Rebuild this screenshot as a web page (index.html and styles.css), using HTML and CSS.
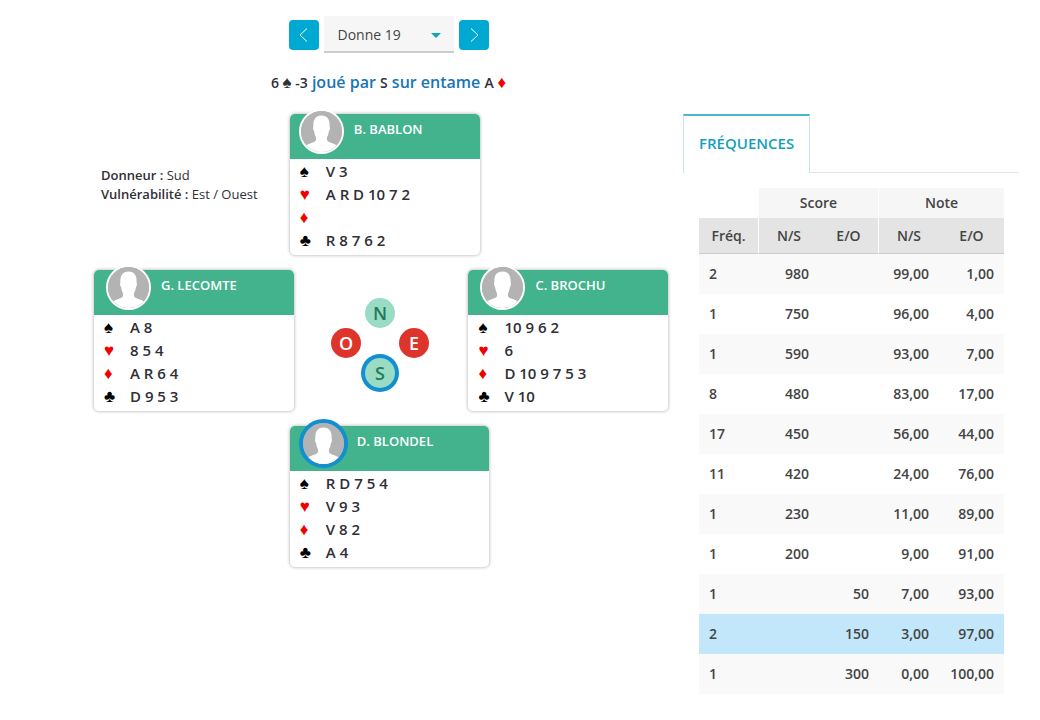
FILE: index.html
```html
<!DOCTYPE html>
<html lang="fr">
<head>
    <meta charset="utf-8">
    <meta name="viewport" content="width=device-width, initial-scale=1">
    <title>Donne 19</title>
    <link rel="stylesheet" href="styles.css">
</head>
<body>
    <!-- Default player picture, reused by the four hands -->
    <svg class="defs" aria-hidden="true">
        <symbol id="avatar" viewBox="0 0 41 41">
            <rect width="41" height="41" fill="#b3b3b3"/>
            <path fill="#fff" d="M20.500 4.500C14.500 4.500 12 8.500 12.400 15.500C11.700 16 12 19 13.200 20.500C13.500 23.500 14.300 25 15 26.500C15.300 29 15 30 13 31C9.500 32.700 6 33 3 36V41H38V36C35 33 31.500 32.700 28 31C26 30 25.700 29 26 26.500C26.700 25 27.500 23.500 27.800 20.500C29 19 29.300 16 28.600 15.500C29 8.500 26.500 4.500 20.500 4.500Z"/>
        </symbol>
    </svg>

    <div class="page">
        <main class="deal">
            <div class="deal-head">
                <form class="deal-nav">
                    <button type="button" class="nav-button" aria-label="Donne précédente">
                        <svg width="14" height="16" viewBox="0 0 14 16"><path d="M10 1.500L3 8L10 14.500"/></svg>
                    </button>
                    <div class="select-wrap">
                        <select class="deal-select" aria-label="Donne">
                            <option>Donne 18</option>
                            <option selected>Donne 19</option>
                            <option>Donne 20</option>
                        </select>
                        <span class="caret"></span>
                    </div>
                    <button type="button" class="nav-button" aria-label="Donne suivante">
                        <svg width="14" height="16" viewBox="0 0 14 16"><path d="M4 1.500L11 8L4 14.500"/></svg>
                    </button>
                </form>
                <p class="contract"><b>6 <span class="suit">♠</span> -3</b> joué par <b>S</b> sur entame <b>A <span class="suit red">♦</span></b></p>
            </div>

            <div class="board">
                <div class="row">
                    <div class="info">
                        <div><b>Donneur :</b> Sud</div>
                        <div><b>Vulnérabilité :</b> Est / Ouest</div>
                    </div>
                    <section class="hand north">
                        <header class="hand-head">
                            <svg class="avatar"><use href="#avatar"/></svg>
                            <h2>B. BABLON</h2>
                        </header>
                        <ul class="cards">
                            <li><span class="suit">♠</span>V 3</li>
                            <li><span class="suit red">♥</span>A R D 10 7 2</li>
                            <li><span class="suit red">♦</span></li>
                            <li><span class="suit">♣</span>R 8 7 6 2</li>
                        </ul>
                    </section>
                </div>

                <div class="row middle">
                    <section class="hand">
                        <header class="hand-head">
                            <svg class="avatar"><use href="#avatar"/></svg>
                            <h2>G. LECOMTE</h2>
                        </header>
                        <ul class="cards">
                            <li><span class="suit">♠</span>A 8</li>
                            <li><span class="suit red">♥</span>8 5 4</li>
                            <li><span class="suit red">♦</span>A R 6 4</li>
                            <li><span class="suit">♣</span>D 9 5 3</li>
                        </ul>
                    </section>
                    <div class="compass">
                        <span class="seat seat-n">N</span>
                        <span class="seat seat-o vulnerable">O</span>
                        <span class="seat seat-e vulnerable">E</span>
                        <span class="seat seat-s active">S</span>
                    </div>
                    <section class="hand">
                        <header class="hand-head">
                            <svg class="avatar"><use href="#avatar"/></svg>
                            <h2>C. BROCHU</h2>
                        </header>
                        <ul class="cards">
                            <li><span class="suit">♠</span>10 9 6 2</li>
                            <li><span class="suit red">♥</span>6</li>
                            <li><span class="suit red">♦</span>D 10 9 7 5 3</li>
                            <li><span class="suit">♣</span>V 10</li>
                        </ul>
                    </section>
                </div>

                <div class="row">
                    <section class="hand south">
                        <header class="hand-head">
                            <svg class="avatar"><use href="#avatar"/></svg>
                            <h2>D. BLONDEL</h2>
                        </header>
                        <ul class="cards">
                            <li><span class="suit">♠</span>R D 7 5 4</li>
                            <li><span class="suit red">♥</span>V 9 3</li>
                            <li><span class="suit red">♦</span>V 8 2</li>
                            <li><span class="suit">♣</span>A 4</li>
                        </ul>
                    </section>
                </div>
            </div>
        </main>

        <aside class="results">
            <div class="tabs">
                <button type="button" class="tab">FRÉQUENCES</button>
            </div>
            <div class="tab-content">
                <table class="scores">
                    <colgroup>
                        <col class="col"><col class="col"><col class="col"><col class="col"><col>
                    </colgroup>
                    <thead>
                        <tr class="groups">
                            <td></td>
                            <th colspan="2">Score</th>
                            <th colspan="2">Note</th>
                        </tr>
                        <tr class="labels">
                            <th>Fréq.</th>
                            <th>N/S</th>
                            <th>E/O</th>
                            <th>N/S</th>
                            <th>E/O</th>
                        </tr>
                    </thead>
                    <tbody>
                        <tr><td>2</td><td>980</td><td></td><td>99,00</td><td>1,00</td></tr>
                        <tr><td>1</td><td>750</td><td></td><td>96,00</td><td>4,00</td></tr>
                        <tr><td>1</td><td>590</td><td></td><td>93,00</td><td>7,00</td></tr>
                        <tr><td>8</td><td>480</td><td></td><td>83,00</td><td>17,00</td></tr>
                        <tr><td>17</td><td>450</td><td></td><td>56,00</td><td>44,00</td></tr>
                        <tr><td>11</td><td>420</td><td></td><td>24,00</td><td>76,00</td></tr>
                        <tr><td>1</td><td>230</td><td></td><td>11,00</td><td>89,00</td></tr>
                        <tr><td>1</td><td>200</td><td></td><td>9,00</td><td>91,00</td></tr>
                        <tr><td>1</td><td></td><td>50</td><td>7,00</td><td>93,00</td></tr>
                        <tr class="current"><td>2</td><td></td><td>150</td><td>3,00</td><td>97,00</td></tr>
                        <tr><td>1</td><td></td><td>300</td><td>0,00</td><td>100,00</td></tr>
                    </tbody>
                </table>
            </div>
        </aside>
    </div>
</body>
</html>
```
FILE: styles.css
```css
* {
    box-sizing: border-box;
}
body {
    margin: 0;
    background: #fff;
    color: #2f2f37;
    font-family: "Open Sans", "Liberation Sans", sans-serif;
    font-size: 14px;
}
button, select {
    font: inherit;
}
b {
    font-weight: 600;
}
.defs {
    display: none;
}
.page {
    display: grid;
    grid-template-columns: minmax(0, 12fr) minmax(0, 7fr);
    gap: 14px;
    padding: 16px 21px 16px 93px;
}

/* Deal picker and contract */
.deal-head {
    padding-left: 15px;
}
.deal-nav {
    display: flex;
    justify-content: center;
    align-items: center;
    gap: 5px;
}
.nav-button {
    display: flex;
    align-items: center;
    justify-content: center;
    width: 30px;
    height: 30px;
    padding: 0;
    border: 0;
    border-radius: 4px;
    background: #00a9d1;
    cursor: pointer;
}
.nav-button path {
    fill: none;
    stroke: #fff;
    stroke-width: 1;
}
.select-wrap {
    position: relative;
}
.deal-select {
    appearance: none;
    width: 130px;
    height: 37px;
    padding: 2px 32px 0 14px;
    border: 0;
    border-bottom: 2px solid #ccc;
    border-radius: 0;
    background: #f6f6f6;
    color: #444;
}
.caret {
    position: absolute;
    top: 17px;
    right: 13px;
    border: 5px solid transparent;
    border-top-color: #12a5b8;
    border-bottom: 0;
    pointer-events: none;
}
.contract {
    margin: 16px 0 17px;
    text-align: center;
    font-size: 16px;
    line-height: 26px;
    font-weight: 600;
    color: #1a75b3;
}
.contract b {
    font-size: 14px;
    color: #2f2f37;
}
.suit {
    font-family: "Liberation Sans", sans-serif;
    font-size: 17px;
    font-weight: 400;
}
.red {
    color: #f00000;
}

/* Hands */
.board {
    display: flex;
    flex-direction: column;
    gap: 13px;
}
.row {
    display: flex;
}
.middle {
    justify-content: space-between;
    align-items: center;
}
.info {
    width: 34%;
    padding: 53px 0 0 8px;
    font-size: 13px;
    line-height: 19px;
}
.hand {
    width: 35%;
    border: 1px solid #ddd;
    border-radius: 6px;
    box-shadow: 0 0 3px rgba(0, 0, 0, 0.2);
}
.north {
    width: calc(100% / 3);
}
.south {
    margin-left: 34%;
}
.hand-head {
    display: flex;
    gap: 10px;
    height: 45px;
    padding-left: 12px;
    border-radius: 5px 5px 0 0;
    background: #42b38d;
}
.north .hand-head {
    padding-left: 9px;
}
.south .hand-head {
    gap: 9px;
    padding-left: 9px;
}
.hand-head h2 {
    margin: 5px 0 0;
    font-size: 13px;
    line-height: 20px;
    font-weight: 600;
    color: #fff;
}
.avatar {
    flex: none;
    width: 45px;
    height: 45px;
    margin-top: -5px;
    border: 2px solid #fff;
    border-radius: 50%;
    background: #b3b3b3;
}
.south .avatar {
    width: 49px;
    height: 49px;
    margin-top: -7px;
    border: 4px solid #128fd0;
}
.cards {
    margin: 0;
    padding: 1px 10px 3px;
    list-style: none;
    font-size: 15px;
    font-weight: 600;
    line-height: 23px;
}
.cards li {
    display: flex;
    height: 23px;
}
.cards .suit {
    width: 26px;
    color: #000;
}
.cards .red {
    color: #f00000;
}

/* Compass */
.compass {
    display: grid;
    grid-template-columns: repeat(3, 34px);
    grid-template-rows: repeat(3, 30px);
    justify-items: center;
    padding: 4px 2px 0 0;
}
.seat {
    width: 30px;
    height: 30px;
    border-radius: 50%;
    background: #9adbc4;
    color: #237a5b;
    font-size: 18px;
    line-height: 30px;
    font-weight: 600;
    text-align: center;
}
.seat-n, .seat-s {
    grid-column: 2;
}
.seat-o {
    grid-area: 2 / 1;
}
.seat-e {
    grid-area: 2 / 3;
}
.seat-s {
    grid-row: 3;
}
.vulnerable {
    background: #dd352c;
    color: #fff;
}
.active {
    box-shadow: 0 0 0 4px #128fd0;
}

/* Results */
.results {
    padding-top: 98px;
}
.tabs {
    display: flex;
    border-bottom: 1px solid #dde7ea;
}
.tab {
    height: 59px;
    margin-bottom: -1px;
    padding: 0 15px 3px;
    border: 1px solid #c5e6ee;
    border-top: 2px solid #45b8cb;
    border-bottom: 0;
    background: #fff;
    color: #149fbd;
    font-size: 15px;
    font-weight: 600;
    cursor: pointer;
}
.tab-content {
    padding: 15px 15px 0 16px;
}
.scores {
    width: 100%;
    table-layout: fixed;
    border-collapse: separate;
    border-spacing: 0;
    font-weight: 600;
    color: #444;
}
.col {
    width: 60px;
}
.scores th, .scores td {
    padding: 0 10px 2px;
    font-weight: 600;
    text-align: right;
}
.scores th {
    padding: 0 0 1px;
    text-align: center;
}
.groups th {
    height: 30px;
    background: #f6f6f6;
}
.labels th {
    height: 36px;
    background: #e4e4e4;
    border-bottom: 1px solid #ccc;
}
.groups th:nth-child(2), .labels th:nth-child(1), .labels th:nth-child(3) {
    border-right: 1px solid #fff;
}
.scores tbody td {
    height: 40px;
}
.scores tbody td:first-child {
    text-align: left;
}
.scores tbody tr:nth-child(odd) {
    background: #f9f9f9;
}
.scores tbody .current {
    background: #c2e7fb;
}
```
